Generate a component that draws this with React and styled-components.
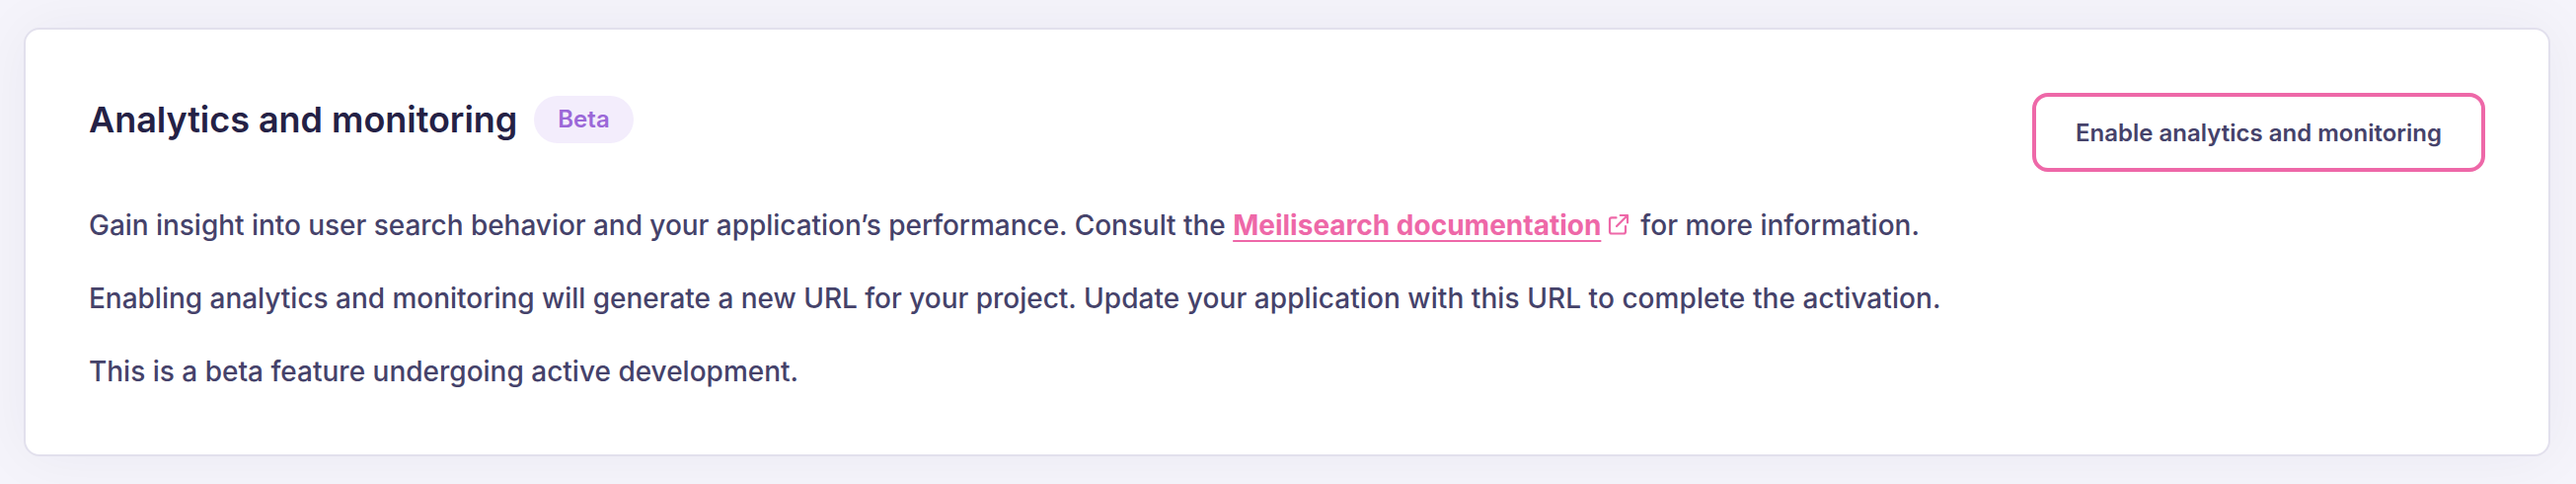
import React from "react";
import styled, { createGlobalStyle } from "styled-components";

const GlobalStyle = createGlobalStyle`
  * { box-sizing: border-box; }
  body {
    margin: 0;
    background: #f5f4fb;
    font-family: Inter, "Liberation Sans", sans-serif;
    overflow: hidden;
  }
`;

const Page = styled.main`
  height: 490px;
  padding: 28px 26px 28px 24px;
  overflow: hidden;
`;

const Card = styled.section`
  display: flex;
  justify-content: space-between;
  align-items: flex-start;
  height: 434px;
  padding: 64px;
  background: #fff;
  border: 2px solid #e2e0ed;
  border-radius: 16px;
  box-shadow: 0 0 60px rgba(36, 32, 60, 0.05);
`;

const Header = styled.header`
  display: flex;
  align-items: center;
  gap: 17px;
  height: 54px;
`;

const Title = styled.h2`
  margin: 0;
  color: #242145;
  font-size: 36px;
  font-weight: 600;
  letter-spacing: -0.04px;
  line-height: 54px;
`;

const Badge = styled.span`
  padding: 0 24px;
  border-radius: 24px;
  background: #f3edfc;
  color: #9b68d8;
  font-size: 24px;
  font-weight: 600;
  line-height: 48px;
`;

const Body = styled.div`
  display: grid;
  gap: 32px;
  margin-top: 59px;
`;

const Text = styled.p`
  margin: 0;
  color: #45426a;
  font-size: 28px;
  font-weight: 500;
  line-height: 42px;
  white-space: nowrap;
`;

const Sentence = styled.span`
  letter-spacing: ${({ $tracking }) => $tracking}px;
`;

const DocLink = styled.a`
  color: #ee68a8;
  font-weight: 700;
  text-decoration: underline;
  text-decoration-thickness: 2px;
  text-underline-offset: 5px;
  text-decoration-skip-ink: none;
`;

const LinkIcon = styled.svg`
  width: 22px;
  height: 22px;
  margin: 0 11px 0 7px;
  vertical-align: 0;
  color: #ee68a8;
`;

const Button = styled.button`
  height: 80px;
  padding: 2px 40px 0;
  border: 4px solid #ee68a8;
  border-radius: 16px;
  background: #fff;
  color: #45426a;
  font: 600 24px/36px Inter, "Liberation Sans", sans-serif;
  white-space: nowrap;
`;

export default function App() {
  return (
    <Page>
      <GlobalStyle />
      <Card>
        <div>
          <Header>
            <Title>Analytics and monitoring</Title>
            <Badge>Beta</Badge>
          </Header>
          <Body>
            <Text>
              <Sentence $tracking={-0.038}>
                Gain insight into user search behavior and your application’s performance. Consult the{" "}
              </Sentence>
              <DocLink>Meilisearch documentation</DocLink>
              <LinkIcon viewBox="0 0 22 22" fill="none" stroke="currentColor" strokeWidth="2.2" strokeLinecap="round" strokeLinejoin="round" aria-hidden="true">
                <path d="M8.5 4.4H4Q2 4.4 2 6.4V18.5Q2 20.5 4 20.5H16Q18 20.5 18 18.5V13M12.7 2H20V9.5M20 2L9 13" />
              </LinkIcon>
              for more information.
            </Text>
            <Text>
              <Sentence $tracking={-0.02}>
                Enabling analytics and monitoring will generate a new URL for your project.{" "}
              </Sentence>
              <Sentence $tracking={0.065}>
                Update your application with this URL to complete the activation.
              </Sentence>
            </Text>
            <Text>This is a beta feature undergoing active development.</Text>
          </Body>
        </div>
        <Button>Enable analytics and monitoring</Button>
      </Card>
    </Page>
  );
}
